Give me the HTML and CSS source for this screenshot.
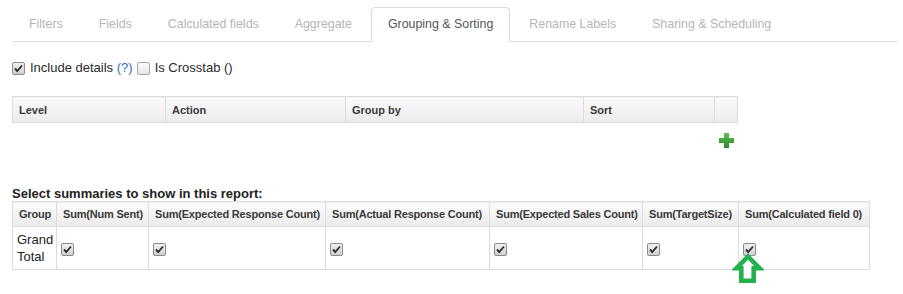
FILE: index.html
```html
<!DOCTYPE html>
<html lang="en">
<head>
    <meta charset="UTF-8">
    <title>Report - Grouping &amp; Sorting</title>
    <link rel="stylesheet" href="styles.css">
</head>
<body>

    <div class="page">
        <ul class="tabs">
            <li><a>Filters</a></li>
            <li><a>Fields</a></li>
            <li><a>Calculated fields</a></li>
            <li><a>Aggregate</a></li>
            <li class="active"><a>Grouping &amp; Sorting</a></li>
            <li><a>Rename Labels</a></li>
            <li><a>Sharing &amp; Scheduling</a></li>
        </ul>

        <div class="options">
            <label class="option"><input type="checkbox" checked><span>Include details <a class="help">(?)</a></span></label>
            <label class="option"><input type="checkbox"><span>Is Crosstab ()</span></label>
        </div>

        <table class="grid grouping">
            <colgroup>
                <col style="width: 153px">
                <col style="width: 180px">
                <col style="width: 238px">
                <col style="width: 131px">
                <col style="width: 23px">
            </colgroup>
            <thead>
                <tr>
                    <th>Level</th>
                    <th>Action</th>
                    <th>Group by</th>
                    <th>Sort</th>
                    <th></th>
                </tr>
            </thead>
        </table>

        <div class="add-row">
            <svg class="add-icon" width="15" height="15" viewBox="0 0 15 15">
                <defs>
                    <linearGradient id="plusGrad" x1="0" y1="0" x2="0" y2="1">
                        <stop offset="0" stop-color="#5cbf4f"/>
                        <stop offset="1" stop-color="#2c8a2c"/>
                    </linearGradient>
                </defs>
                <path d="M5 0h5v5h5v5h-5v5h-5v-5h-5v-5h5z" fill="url(#plusGrad)"/>
            </svg>
        </div>

        <h4 class="summary-title">Select summaries to show in this report:</h4>

        <div class="summary">
            <table class="grid summaries">
                <colgroup>
                    <col style="width: 44px">
                    <col style="width: 92px">
                    <col style="width: 177px">
                    <col style="width: 164px">
                    <col style="width: 153px">
                    <col style="width: 96px">
                    <col style="width: 131px">
                </colgroup>
                <thead>
                    <tr>
                        <th>Group</th>
                        <th>Sum(Num Sent)</th>
                        <th>Sum(Expected Response Count)</th>
                        <th>Sum(Actual Response Count)</th>
                        <th>Sum(Expected Sales Count)</th>
                        <th>Sum(TargetSize)</th>
                        <th>Sum(Calculated field 0)</th>
                    </tr>
                </thead>
                <tbody>
                    <tr>
                        <td class="group-name">Grand Total</td>
                        <td><input type="checkbox" checked></td>
                        <td><input type="checkbox" checked></td>
                        <td><input type="checkbox" checked></td>
                        <td><input type="checkbox" checked></td>
                        <td><input type="checkbox" checked></td>
                        <td><input type="checkbox" checked></td>
                    </tr>
                </tbody>
            </table>

            <!-- annotation arrow pointing at the new column -->
            <svg class="pointer" width="32" height="32" viewBox="0 0 32 32">
                <polygon points="16,3.5 27.5,15.3 21.7,15.3 21.7,27.7 9.3,27.7 9.3,15.3 4.5,15.3" fill="#ffffff" stroke="#22b14c" stroke-width="4.6" stroke-linejoin="miter"/>
            </svg>
        </div>
    </div>

</body>
</html>
```

FILE: styles.css
```css
:root {
    --border: #dcdcdc;
    --tab-muted: #b5b5b5;
    --tab-active: #555555;
    --text: #333333;
    --link: #2f6db5;
}

* {
    box-sizing: border-box;
}

html,
body {
    min-height: 100%;
}

body {
    margin: 0;
    font-family: 'Liberation Sans', Arial, sans-serif;
    font-size: 13px;
    color: var(--text);
    background: #ffffff;
}

.page {
    padding: 7px 5px 30px 12px;
}

/* tabs */

.tabs {
    list-style: none;
    margin: 0;
    padding: 0;
    display: flex;
    border-bottom: 1px solid var(--border);
}

.tabs li {
    margin: 0 2px -1px 0;
}

.tabs a {
    display: block;
    padding: 7px 16px 8px;
    line-height: 18px;
    font-size: 12.4px;
    color: var(--tab-muted);
    border: 1px solid transparent;
    border-radius: 4px 4px 0 0;
    cursor: pointer;
}

.tabs .active a {
    color: var(--tab-active);
    background: #ffffff;
    border-color: var(--border);
    border-bottom-color: #ffffff;
}

/* options */

.options {
    margin-top: 17px;
    display: flex;
    align-items: center;
    gap: 4px;
    line-height: 18px;
    font-size: 13px;
    color: #2a2a2a;
}

.option {
    display: flex;
    align-items: center;
    gap: 5px;
}

.help {
    color: var(--link);
}

input[type="checkbox"] {
    appearance: none;
    -webkit-appearance: none;
    width: 13px;
    height: 13px;
    margin: 0;
    border: 1px solid #a7a7a7;
    border-radius: 2px;
    background: linear-gradient(#fdfdfd, #e4e4e4);
    vertical-align: middle;
}

input[type="checkbox"]:checked {
    border-color: #8a8a8a;
    background:
        url("data:image/svg+xml;utf8,<svg xmlns='http://www.w3.org/2000/svg' width='11' height='11' viewBox='0 0 11 11'><path d='M2 5.5l2.2 2.5L9 2.5' fill='none' stroke='%23303030' stroke-width='1.9'/></svg>") center / 11px 11px no-repeat,
        linear-gradient(#f2f2f2, #cfcfcf);
}

/* tables */

.grid {
    border-collapse: collapse;
    table-layout: fixed;
}

.grid th,
.grid td {
    border: 1px solid var(--border);
    text-align: left;
    white-space: nowrap;
}

.grid th {
    font-size: 11px;
    font-weight: bold;
    color: #3a3a3a;
    background: linear-gradient(#fbfbfb, #ebebeb);
}

.grouping {
    margin-top: 19px;
    width: 725px;
}

.grouping th {
    height: 26px;
    padding: 0 6px;
}

.add-row {
    width: 725px;
    margin-top: 10px;
    display: flex;
    justify-content: flex-end;
    padding-right: 3px;
}

.add-icon {
    display: block;
}

.summary-title {
    margin: 38px 0 0;
    font-size: 13px;
    line-height: 15px;
    font-weight: bold;
    color: #222222;
}

.summary {
    position: relative;
    width: 857px;
}

.summaries {
    width: 857px;
}

.summaries th {
    height: 25px;
    padding: 0 6px;
    letter-spacing: -0.2px;
}

.summaries td {
    height: 43px;
    padding: 4px;
    vertical-align: middle;
}

.summaries .group-name {
    white-space: normal;
    padding: 3px 4px;
    font-size: 13px;
    line-height: 17px;
    color: #222222;
}

.pointer {
    position: absolute;
    left: 720px;
    top: 52px;
}
```
